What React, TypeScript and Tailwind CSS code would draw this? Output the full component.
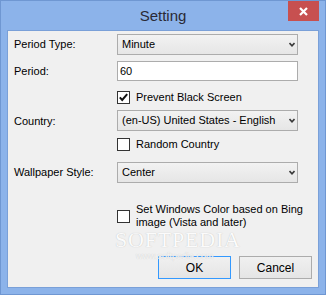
import React from "react";

const font = { fontFamily: '"Liberation Sans", Arial, sans-serif' };

function Chevron() {
  return (
    <svg width="6" height="5" viewBox="0 0 6 5" className="shrink-0">
      <path d="M0.5 1 L3 3.8 L5.5 1" fill="none" stroke="#3a3a3a" strokeWidth="1.6" />
    </svg>
  );
}

function Dropdown({ value }: { value: string }) {
  return (
    <div className="h-[21px] w-[181px] border border-[#acacac] bg-linear-to-b from-[#f2f2f2] to-[#e6e6e6] flex items-center justify-between pl-[4px] pr-[2px]">
      <span className="leading-none">{value}</span>
      <Chevron />
    </div>
  );
}

function Check({ checked }: { checked?: boolean }) {
  return (
    <div className="w-[13px] h-[13px] border border-[#333333] bg-white shrink-0 flex items-center justify-center">
      {checked && (
        <svg width="11" height="11" viewBox="0 0 11 11">
          <path d="M1.8 5.4 L4.2 7.9 L9.2 2.2" fill="none" stroke="#111" strokeWidth="2" />
        </svg>
      )}
    </div>
  );
}

function Label({ children }: { children: React.ReactNode }) {
  return <div className="w-[103px] shrink-0 leading-none">{children}</div>;
}

export default function App() {
  return (
    <div
      className="w-[326px] h-[295px] bg-[#8cb3ea] border border-[#6f97d2] flex flex-col px-[6px] pb-[6px] text-[11px] text-black"
      style={font}
    >
      {/* Title bar */}
      <div className="h-[29px] grid grid-cols-[1fr_auto_1fr] shrink-0">
        <div />
        <div className="self-center text-[15px] text-[#2a2a35] leading-none pb-[1px]">Setting</div>
        <div className="flex justify-end items-start">
          <div className="w-[31px] h-[20px] bg-[#c75050] flex items-center justify-center">
            <svg width="9" height="9" viewBox="0 0 9 9">
              <path d="M1 1 L8 8 M8 1 L1 8" stroke="white" strokeWidth="2.2" />
            </svg>
          </div>
        </div>
      </div>

      {/* Panel */}
      <div className="relative h-[258px] border border-[#7aa0d8] bg-[#f0f0f0] pl-[6px] flex flex-col">
        <div className="mt-[3px] h-[21px] flex items-center">
          <Label>Period Type:</Label>
          <Dropdown value="Minute" />
        </div>
        <div className="mt-[6px] h-[20px] flex items-center">
          <Label>Period:</Label>
          <div className="h-[20px] w-[181px] border border-[#acacac] bg-white flex items-center pl-[2px]">
            <span className="leading-none">60</span>
          </div>
        </div>
        <div className="mt-[10px] h-[13px] flex items-center">
          <div className="w-[103px] shrink-0" />
          <Check checked />
          <span className="ml-[6px] leading-none">Prevent Black Screen</span>
        </div>
        <div className="mt-[6px] h-[21px] flex items-center">
          <Label>
            <span className="relative top-[1px]">Country:</span>
          </Label>
          <Dropdown value="(en-US) United States - English" />
        </div>
        <div className="mt-[7px] h-[13px] flex items-center">
          <div className="w-[103px] shrink-0" />
          <Check />
          <span className="ml-[6px] leading-none">Random Country</span>
        </div>
        <div className="mt-[11px] h-[21px] flex items-center">
          <Label>Wallpaper Style:</Label>
          <Dropdown value="Center" />
        </div>
        <div className="mt-[20px] h-[26px] flex items-center">
          <div className="w-[103px] shrink-0" />
          <Check />
          <div className="ml-[6px] leading-[13px]">
            Set Windows Color based on Bing
            <br />
            image (Vista and later)
          </div>
        </div>

        {/* Watermark */}
        <div
          className="absolute left-[107px] top-[199px] text-[22px] leading-[20px] text-[#fbfbfb] tracking-[0.8px] [text-shadow:0_0_1px_#b8b8b8] pointer-events-none"
          style={{ fontFamily: '"Liberation Serif", serif' }}
        >
          SOFTPEDIA
        </div>
        <div className="absolute left-[128px] top-[221px] text-[9px] leading-none text-[#f6f6f6] [text-shadow:0_0_1px_#c4c4c4] pointer-events-none">
          www.softpedia.com
        </div>

        <div className="mt-[27px] flex justify-end gap-[8px] pr-[6px]">
          <div className="w-[73px] h-[23px] border border-[#3399ff] bg-linear-to-b from-[#f0f0f0] to-[#e5e5e5] flex items-center justify-center text-[12px] leading-none">
            OK
          </div>
          <div className="w-[73px] h-[23px] border border-[#acacac] bg-linear-to-b from-[#f0f0f0] to-[#e5e5e5] flex items-center justify-center text-[12px] leading-none">
            Cancel
          </div>
        </div>
      </div>
    </div>
  );
}
